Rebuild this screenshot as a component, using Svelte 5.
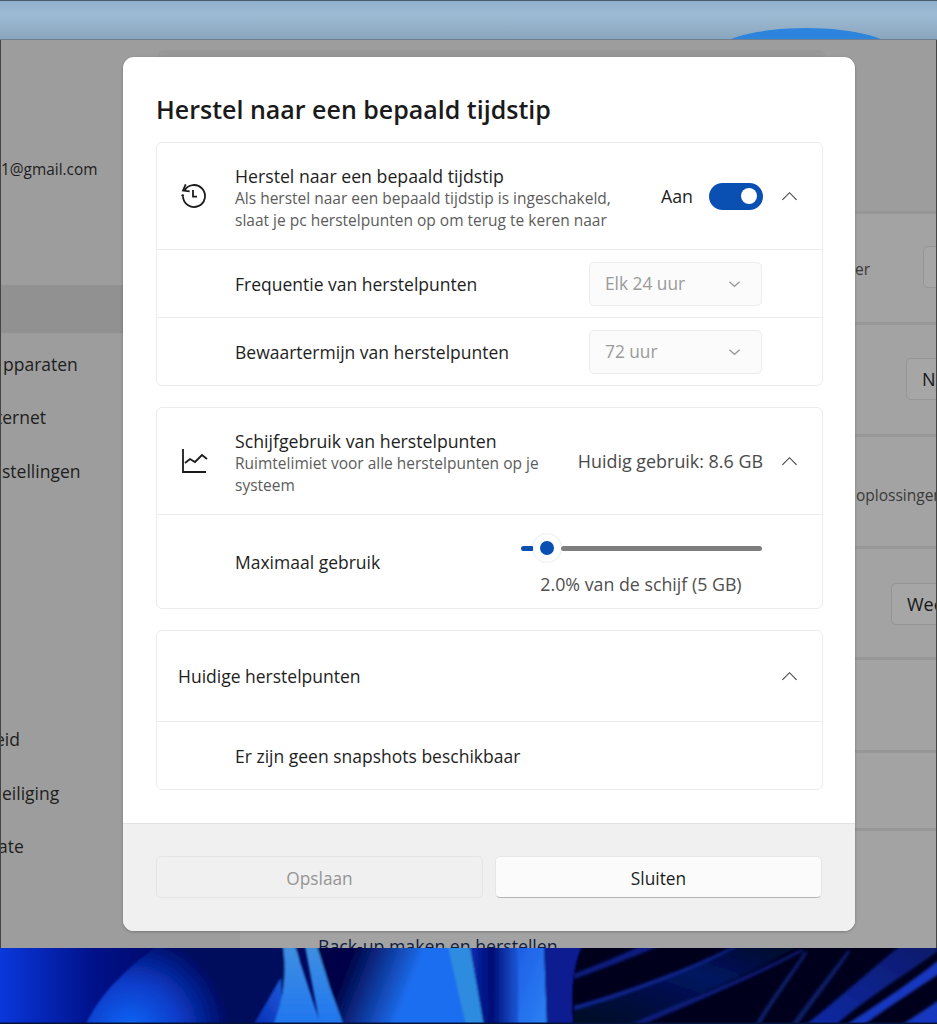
<script>
  const sidebarItems = [
    { label: '1@gmail.com', top: 159, left: 0, small: true },
    { label: 'pparaten', top: 353, left: 2 },
    { label: 'ternet', top: 406, left: -5 },
    { label: 'stellingen', top: 460, left: 1 },
    { label: 'eid', top: 728, left: -6 },
    { label: 'eiliging', top: 782, left: 1 },
    { label: 'ate', top: 835, left: -3 }
  ];
  const dividers = [211, 322, 434, 546, 657, 750, 828];
</script>

<div class="desktop">
  <!-- sky strip above the settings window -->
  <div class="sky">
    <div class="sun"></div>
  </div>

  <!-- settings window behind the dialog, dimmed -->
  <div class="settings">
    <div class="sidebar">
      <div class="selected"></div>
      {#each sidebarItems as item}
        <span class="side-item" class:small={item.small} style="top: {item.top - 40}px; left: {item.left}px">{item.label}</span>
      {/each}
    </div>
    <div class="main">
      <div class="ghost-top"></div>
      <div class="ghost-card"></div>
      {#each dividers as y}
        <div class="divider" style="top: {y - 40}px"></div>
      {/each}
      <span class="ghost-text er">er</span>
      <span class="ghost-text opl">oplossingen</span>
      <span class="ghost-btn b1"></span>
      <span class="ghost-btn b2">N</span>
      <span class="ghost-btn b3">Wee</span>
      <span class="backup">Back-up maken en herstellen</span>
    </div>
  </div>

  <!-- wallpaper at the bottom -->
  <svg class="wallpaper" viewBox="0 0 937 76" aria-hidden="true">
    <defs>
      <linearGradient id="base" x1="0" x2="1" y1="0" y2="0">
        <stop offset="0" stop-color="#0a38dc" />
        <stop offset="0.1" stop-color="#00118a" />
        <stop offset="0.2" stop-color="#00075c" />
      </linearGradient>
      <radialGradient id="lobe" gradientUnits="userSpaceOnUse" cx="130" cy="84" r="100">
        <stop offset="0" stop-color="#1468fa" />
        <stop offset="0.5" stop-color="#0a3cc8" />
        <stop offset="1" stop-color="#00075c" />
      </radialGradient>
      <linearGradient id="ribbon" x1="0" x2="0" y1="0" y2="1">
        <stop offset="0" stop-color="#3f8fe0" />
        <stop offset="1" stop-color="#2076f0" />
      </linearGradient>
      <linearGradient id="wedge" x1="1" x2="0" y1="0" y2="1">
        <stop offset="0" stop-color="#1a5cdc" />
        <stop offset="1" stop-color="#0a2cb4" />
      </linearGradient>
      <linearGradient id="mid" gradientUnits="userSpaceOnUse" x1="345" y1="28" x2="405" y2="52">
        <stop offset="0" stop-color="#00064a" />
        <stop offset="1" stop-color="#1c6ef0" />
      </linearGradient>
      <linearGradient id="fold" x1="0" x2="1" y1="0" y2="0">
        <stop offset="0" stop-color="#0a2cb0" />
        <stop offset="0.45" stop-color="#000c74" />
        <stop offset="1" stop-color="#1a58d8" />
      </linearGradient>
      <linearGradient id="bright" x1="0" x2="1" y1="0" y2="1">
        <stop offset="0" stop-color="#1d5ee6" />
        <stop offset="1" stop-color="#2d82f4" />
      </linearGradient>
      <linearGradient id="band" x1="0" x2="1" y1="1" y2="0">
        <stop offset="0" stop-color="#020620" />
        <stop offset="0.6" stop-color="#061460" />
        <stop offset="1" stop-color="#030824" />
      </linearGradient>
      <linearGradient id="wide" x1="0" x2="1" y1="1" y2="0">
        <stop offset="0" stop-color="#0b2aa6" />
        <stop offset="1" stop-color="#071a6a" />
      </linearGradient>
      <filter id="soft" x="-5%" y="-20%" width="110%" height="140%">
        <feGaussianBlur stdDeviation="0.8" />
      </filter>
      <filter id="softer" x="-5%" y="-20%" width="110%" height="140%">
        <feGaussianBlur stdDeviation="1.6" />
      </filter>
    </defs>
    <rect width="937" height="76" fill="url(#base)" />
    <g filter="url(#soft)">
      <path d="M85 78 C100 45 125 22 157 -2 L300 -2 L300 78 Z" fill="url(#lobe)" />
      <path d="M253 78 L281 30 L283 78 Z" fill="url(#wedge)" />
      <path d="M283 -2 L295 -2 L321 78 L273 78 C284 50 287 25 283 -2 Z" fill="url(#ribbon)" />
      <path d="M305 -2 L317 -2 L344 78 L320 78 Z" fill="url(#ribbon)" />
      <path d="M317 -2 L450 -2 L466 78 L344 78 L330 40 Z" fill="url(#mid)" />
      <path d="M448 -2 L470 -2 L484 78 L466 78 Z" fill="#2f8ce0" />
      <path d="M470 -2 L517 -2 L518 78 L484 78 Z" fill="url(#fold)" />
      <path d="M517 -2 L544 -2 L547 78 L518 78 Z" fill="url(#bright)" />
      <path d="M544 -2 L582 -2 C572 20 570 50 574 78 L547 78 Z" fill="#081f90" />
      <path d="M582 -2 L939 -2 L939 78 L574 78 C570 50 572 20 582 -2 Z" fill="#02041c" />
    </g>
    <g filter="url(#softer)">
      <path d="M574 26 C600 15 620 8 640 -2 L660 -2 C630 10 600 22 574 31 Z" fill="#0a1f80" />
      <path d="M574 58 C630 42 690 20 734 -2 L800 -2 C740 30 690 50 627 78 L574 78 Z" fill="url(#band)" />
      <path d="M574 58 C630 42 690 20 734 -2 L738 -2 C690 24 630 46 574 62 Z" fill="#0b2590" />
      <path d="M627 78 C690 50 750 28 800 2 L805 2 C750 32 690 56 640 78 Z" fill="#0a1f7c" />
      <path d="M754 78 C770 50 790 25 804 4 L808 4 C794 28 774 52 760 78 Z" fill="#071a60" />
      <path d="M790 78 C810 50 830 25 847 3 L851 3 C835 28 815 52 797 78 Z" fill="#071a60" />
      <path d="M804 78 C840 50 870 22 900 -2 L937 -2 L937 4 C900 30 860 55 835 78 Z" fill="url(#wide)" />
      <path d="M844 78 C880 55 910 35 939 12 L939 26 C905 48 880 65 862 78 Z" fill="#1438c0" />
      <path d="M900 78 C915 68 928 60 939 52 L939 78 Z" fill="#1838c0" />
    </g>
    <rect y="74.5" width="937" height="1.5" fill="#05123a" />
  </svg>

  <!-- dialog -->
  <div class="dialog">
    <div class="body">
      <h1>Herstel naar een bepaald tijdstip</h1>

      <section class="card">
        <div class="row head">
          <svg class="icon" viewBox="0 0 28 28" aria-hidden="true">
            <path d="M6.7 2.3 L4 8.6 L10.7 9.3" />
            <path d="M5.3 8.8 A11 11 0 1 1 4 14.5" />
            <circle class="dot" cx="3.7" cy="13.5" r="1.3" />
            <path d="M14 8 V14.7 H18" />
          </svg>
          <div class="titles">
            <div class="title">Herstel naar een bepaald tijdstip</div>
            <div class="sub">Als herstel naar een bepaald tijdstip is ingeschakeld,<br />slaat je pc herstelpunten op om terug te keren naar</div>
          </div>
          <span class="aan">Aan</span>
          <span class="toggle"><span class="knob"></span></span>
          <svg class="chev" viewBox="0 0 18 10" aria-hidden="true"><path d="M1.5 9 L9 1.5 L16.5 9" /></svg>
        </div>
        <div class="row sub-row line">
          <span class="label">Frequentie van herstelpunten</span>
          <div class="select">
            <span>Elk 24 uur</span>
            <svg viewBox="0 0 14 8" aria-hidden="true"><path d="M1.5 1.5 L7 6.5 L12.5 1.5" /></svg>
          </div>
        </div>
        <div class="row sub-row line">
          <span class="label">Bewaartermijn van herstelpunten</span>
          <div class="select">
            <span>72 uur</span>
            <svg viewBox="0 0 14 8" aria-hidden="true"><path d="M1.5 1.5 L7 6.5 L12.5 1.5" /></svg>
          </div>
        </div>
      </section>

      <section class="card">
        <div class="row head">
          <svg class="icon chart" viewBox="0 0 28 28" aria-hidden="true">
            <path d="M3 2 V25 H26" />
            <path d="M5 16 L10 12 L15 15 L22 8 L27 12" />
          </svg>
          <div class="titles">
            <div class="title">Schijfgebruik van herstelpunten</div>
            <div class="sub">Ruimtelimiet voor alle herstelpunten op je<br />systeem</div>
          </div>
          <span class="usage">Huidig gebruik: 8.6 GB</span>
          <svg class="chev" viewBox="0 0 18 10" aria-hidden="true"><path d="M1.5 9 L9 1.5 L16.5 9" /></svg>
        </div>
        <div class="row slider-row line">
          <span class="label">Maximaal gebruik</span>
          <div class="slider-wrap">
            <div class="slider">
              <span class="fill"></span>
              <span class="thumb"></span>
              <span class="track"></span>
            </div>
            <div class="slider-text">2.0% van de schijf (5 GB)</div>
          </div>
        </div>
      </section>

      <section class="card">
        <div class="row plain">
          <span class="label grow">Huidige herstelpunten</span>
          <svg class="chev" viewBox="0 0 18 10" aria-hidden="true"><path d="M1.5 9 L9 1.5 L16.5 9" /></svg>
        </div>
        <div class="row sub-row line">
          <span class="label">Er zijn geen snapshots beschikbaar</span>
        </div>
      </section>
    </div>

    <div class="footer">
      <button class="btn disabled" disabled>Opslaan</button>
      <button class="btn">Sluiten</button>
    </div>
  </div>
</div>

<style>
  :global(body) {
    margin: 0;
    background: #000;
  }

  .desktop {
    position: relative;
    width: 937px;
    height: 1024px;
    overflow: hidden;
    display: flex;
    flex-direction: column;
    font-family: "Open Sans", "Noto Sans", sans-serif;
    color: #1b1b1b;
  }

  .sky {
    position: relative;
    height: 40px;
    flex: none;
    overflow: hidden;
    background: linear-gradient(#8fb0cc 0%, #9dbbd4 35%, #8aa6bd 100%);
    border-top: 1px solid #4a5a6c;
    box-sizing: border-box;
    border-bottom: 1px solid #6f7f8e;
  }

  .sun {
    position: absolute;
    left: 716px;
    top: 27px;
    width: 180px;
    height: 50px;
    border-radius: 50%;
    background: #2c84dc;
  }

  .settings {
    flex: none;
    height: 908px;
    display: flex;
    background: #a3a3a3;
    border-left: 1px solid #444;
    border-right: 1px solid #444;
    box-sizing: border-box;
    overflow: hidden;
  }

  .sidebar {
    position: relative;
    width: 239px;
    flex: none;
    background: #9d9d9d;
  }

  .selected {
    position: absolute;
    left: 0;
    right: 0;
    top: 245px;
    height: 48px;
    background: #919191;
  }

  .side-item {
    position: absolute;
    font-size: 17.5px;
    line-height: 22px;
    color: #1e1e1e;
    white-space: nowrap;
  }

  .small {
    font-size: 15.4px;
  }

  .main {
    position: relative;
    flex: 1;
  }

  .ghost-top {
    position: absolute;
    left: 0;
    right: 0;
    top: 0;
    height: 171px;
    background: #9d9d9d;
  }

  .ghost-card {
    position: absolute;
    left: -82px;
    top: 10px;
    width: 667px;
    height: 30px;
    background: #989898;
    border-radius: 6px;
  }

  .divider {
    position: absolute;
    left: 0;
    right: 0;
    height: 3px;
    background: #979797;
  }

  .ghost-text {
    position: absolute;
    font-size: 15.5px;
    line-height: 20px;
    color: #3a3a3a;
  }

  .er { left: 615px; top: 219px; }
  .opl { left: 616px; top: 445px; }

  .ghost-btn {
    position: absolute;
    height: 42px;
    width: 80px;
    box-sizing: border-box;
    padding-left: 15px;
    font-size: 18px;
    line-height: 40px;
    background: #a6a6a6;
    border: 1px solid #969696;
    border-radius: 5px;
    color: #161616;
  }

  .b1 { left: 683px; top: 206px; }
  .b2 { left: 666px; top: 318px; }
  .b3 { left: 651px; top: 543px; }

  .backup {
    position: absolute;
    left: 78px;
    top: 894px;
    font-size: 17.7px;
    line-height: 24px;
    color: #0e1c40;
    white-space: nowrap;
  }

  .wallpaper {
    flex: none;
    display: block;
    width: 937px;
    height: 76px;
  }

  .dialog {
    position: absolute;
    left: 123px;
    top: 57px;
    width: 732px;
    height: 874px;
    display: flex;
    flex-direction: column;
    background: #fff;
    border-radius: 11px;
    overflow: hidden;
    box-shadow: 0 1px 3px rgba(0, 0, 0, 0.25);
  }

  .body {
    flex: 1;
    padding: 0 32px 0 33px;
    display: flex;
    flex-direction: column;
  }

  h1 {
    margin: 0;
    height: 85px;
    padding-top: 34px;
    box-sizing: border-box;
    font-size: 25px;
    line-height: 36px;
    font-weight: 600;
    color: #1a1a1a;
    white-space: nowrap;
  }

  .card {
    border: 1px solid #ececec;
    border-radius: 6px;
    margin-bottom: 21px;
  }

  .row {
    display: flex;
    align-items: center;
    box-sizing: border-box;
    padding-right: 24px;
  }

  .line {
    border-top: 1px solid #ececec;
  }

  .head {
    height: 106px;
  }

  .plain {
    height: 90px;
    padding-left: 21px;
  }

  .sub-row {
    height: 68px;
    padding-left: 78px;
  }

  .slider-row {
    height: 94px;
    padding-left: 78px;
  }

  .icon {
    width: 28px;
    height: 28px;
    margin-left: 22px;
    margin-right: 28px;
    flex: none;
    fill: none;
    stroke: #1b1b1b;
    stroke-width: 1.8;
  }

  .chart {
    margin-left: 23px;
    margin-right: 27px;
  }

  .dot {
    fill: #1b1b1b;
    stroke: none;
  }

  .titles {
    flex: 1;
    min-width: 0;
    padding-top: 3px;
  }

  .title {
    font-size: 17.7px;
    line-height: 24px;
    color: #1e1e1e;
    white-space: nowrap;
  }

  .sub {
    font-size: 15.5px;
    line-height: 21.5px;
    color: #5c5c5c;
    white-space: nowrap;
  }

  .label {
    font-size: 17.5px;
    line-height: 24px;
    color: #1e1e1e;
    white-space: nowrap;
  }

  .grow {
    flex: 1;
  }

  .aan {
    font-size: 17.8px;
    color: #1e1e1e;
    margin-right: 16px;
  }

  .usage {
    font-size: 17.9px;
    color: #4a4a4a;
    margin-right: 18px;
    white-space: nowrap;
  }

  .toggle {
    width: 54px;
    height: 27px;
    border-radius: 14px;
    background: #0a50b2;
    display: flex;
    align-items: center;
    justify-content: flex-end;
    padding-right: 6px;
    box-sizing: border-box;
    margin-right: 18px;
    flex: none;
  }

  .knob {
    width: 16px;
    height: 16px;
    border-radius: 50%;
    background: #fff;
  }

  .chev {
    width: 17px;
    height: 10px;
    flex: none;
    fill: none;
    stroke: #444;
    stroke-width: 1.2;
  }

  .select {
    margin-left: auto;
    margin-right: 36px;
    width: 173px;
    height: 44px;
    box-sizing: border-box;
    display: flex;
    align-items: center;
    justify-content: space-between;
    padding: 0 20px 0 15px;
    background: #fbfbfb;
    border: 1px solid #ececec;
    border-radius: 5px;
    font-size: 17.3px;
    color: #9a9a9a;
  }

  .select svg {
    width: 13px;
    height: 8px;
    fill: none;
    stroke: #9a9a9a;
    stroke-width: 1.4;
  }

  .slider-wrap {
    align-self: flex-start;
    margin-left: auto;
    margin-right: 36px;
    margin-top: 18px;
    width: 242px;
  }

  .slider {
    display: flex;
    align-items: center;
    height: 30px;
  }

  .fill {
    width: 13px;
    height: 5px;
    margin-left: 1px;
    border-radius: 3px;
    background: #0a50b2;
  }

  .thumb {
    width: 28px;
    height: 28px;
    margin: 0 0 0 -1px;
    flex: none;
    box-sizing: border-box;
    border-radius: 50%;
    background: #0a50b2;
    border: 7px solid #fff;
    box-shadow: 0 0 2px rgba(0, 0, 0, 0.2);
  }

  .track {
    flex: 1;
    height: 5px;
    border-radius: 3px;
    background: #7e7e7e;
  }

  .slider-text {
    margin-top: 9px;
    font-size: 17.8px;
    line-height: 24px;
    text-align: center;
    color: #4f4f4f;
    white-space: nowrap;
  }

  .footer {
    flex: none;
    height: 108px;
    box-sizing: border-box;
    display: grid;
    grid-template-columns: 1fr 1fr;
    gap: 12px;
    padding: 32px 33px;
    background: #f0f0f0;
    border-top: 1px solid #e2e2e2;
  }

  .btn {
    height: 42px;
    padding-top: 3px;
    font: inherit;
    font-size: 17.3px;
    color: #1b1b1b;
    background: #fbfbfb;
    border: 1px solid #e6e6e6;
    border-bottom-color: #b4b4b4;
    border-radius: 5px;
  }

  .disabled {
    background: #f0f0f0;
    border-color: #e4e4e4;
    color: #959595;
  }
</style>
